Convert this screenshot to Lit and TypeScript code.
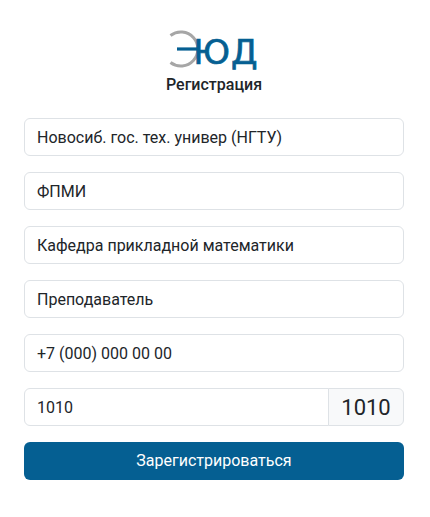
import { LitElement, html, css } from "lit";
import { customElement } from "lit/decorators.js";

const fields = [
  "Новосиб. гос. тех. универ (НГТУ)",
  "ФПМИ",
  "Кафедра прикладной математики",
  "Преподаватель",
  "+7 (000) 000 00 00",
];

@customElement("app-root")
export class AppRoot extends LitElement {
  static styles = css`
    :host {
      display: block;
      box-sizing: border-box;
      height: 517px;
      background: #fff;
      padding: 27px 26px 0 24px;
      font-family: Roboto, "Noto Sans", sans-serif;
      color: #212529;
    }
    .head {
      display: flex;
      flex-direction: column;
      align-items: center;
      margin-bottom: 23px;
    }
    .logo {
      display: flex;
      align-items: center;
      height: 44px;
    }
    .logo svg {
      display: block;
      width: 24px;
      height: 44px;
      flex: none;
      overflow: visible;
    }
    .brand {
      font-family: "DejaVu Sans", sans-serif;
      font-size: 34px;
      font-weight: 400;
      letter-spacing: 1px;
      -webkit-text-stroke: 0.7px #055f92;
      line-height: 44px;
      margin-top: 5px;
      color: #055f92;
    }
    h1 {
      margin: 4px 0 0;
      font-size: 16px;
      line-height: 20px;
      font-weight: 500;
      color: #212529;
    }
    form {
      display: flex;
      flex-direction: column;
      gap: 16px;
    }
    input {
      display: block;
      box-sizing: border-box;
      width: 100%;
      height: 38px;
      padding: 0 12px;
      border: 1px solid #dee2e6;
      border-radius: 6px;
      background: #fff;
      font: 400 16px/24px Roboto, "Noto Sans", sans-serif;
      color: #212529;
      outline: none;
    }
    .captcha {
      display: flex;
    }
    .captcha input {
      flex: 1;
      min-width: 0;
      border-radius: 6px 0 0 6px;
    }
    .code {
      flex: none;
      box-sizing: border-box;
      width: 76px;
      height: 38px;
      margin-left: -1px;
      display: flex;
      align-items: center;
      justify-content: center;
      border: 1px solid #dee2e6;
      border-radius: 0 6px 6px 0;
      background: #f8f9fa;
      font-size: 22px;
      color: #212529;
    }
    button {
      height: 38px;
      border: 0;
      border-radius: 6px;
      background: #055f92;
      color: #fff;
      font: 400 16px/24px Roboto, "Noto Sans", sans-serif;
      padding: 0;
    }
  `;

  render() {
    return html`
      <div class="head">
        <div class="logo">
          <svg viewBox="0 0 24 44" fill="none">
            <path d="M1.5 8.5 A17 17 0 1 1 1.5 35.5" stroke="#a6a6a6" stroke-width="3" />
            <path d="M8 22 H30" stroke="#055f92" stroke-width="3.2" />
          </svg>
          <span class="brand">ЮД</span>
        </div>
        <h1>Регистрация</h1>
      </div>
      <form>
        ${fields.map((f) => html`<input .value=${f} />`)}
        <div class="captcha">
          <input .value=${"1010"} />
          <div class="code">1010</div>
        </div>
        <button type="button">Зарегистрироваться</button>
      </form>
    `;
  }
}
